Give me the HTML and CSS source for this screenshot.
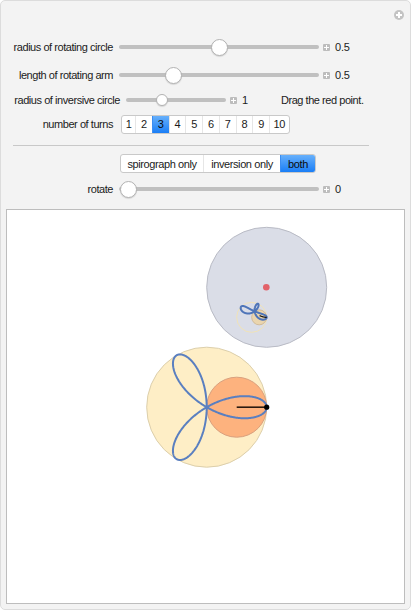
FILE: index.html
```html
<!DOCTYPE html>
<html>
<head>
<meta charset="utf-8">
<link rel="stylesheet" href="styles.css">
</head>
<body>
<div class="panel">
  <span class="corner-plus"></span>
  <div class="row r1">
    <span class="label">radius of rotating circle</span>
    <div class="slider"><div class="track"></div><div class="thumb" style="left:100px"></div></div>
    <span class="plus"></span><span class="val">0.5</span>
  </div>
  <div class="row r2">
    <span class="label">length of rotating arm</span>
    <div class="slider"><div class="track"></div><div class="thumb" style="left:54px"></div></div>
    <span class="plus"></span><span class="val">0.5</span>
  </div>
  <div class="row r3">
    <span class="label wide">radius of inversive circle</span>
    <div class="slider short"><div class="track"></div><div class="thumb small" style="left:35.5px"></div></div>
    <span class="plus"></span><span class="val">1</span>
    <span class="hint">Drag the red point.</span>
  </div>
  <div class="row r4">
    <span class="label">number of turns</span>
    <div class="seg nums">
      <span class="first">1</span><span>2</span><span class="sel">3</span><span>4</span><span>5</span><span>6</span><span>7</span><span>8</span><span>9</span><span class="ten">10</span>
    </div>
  </div>
  <div class="sep"></div>
  <div class="row r5">
    <div class="seg modes">
      <span class="m1">spirograph only</span><span class="m2">inversion only</span><span class="m3 sel">both</span>
    </div>
  </div>
  <div class="row r6">
    <span class="label">rotate</span>
    <div class="slider"><div class="track"></div><div class="thumb" style="left:9.7px"></div></div>
    <span class="plus"></span><span class="val">0</span>
  </div>
  <div class="frame">
    <svg class="plot" width="397" height="393" viewBox="7 210 397 393" xmlns="http://www.w3.org/2000/svg">
      <circle cx="266.7" cy="287.3" r="60" fill="#dadde7" stroke="#b9bbc5" stroke-width="1"/>
      <circle cx="206.7" cy="407.2" r="60" fill="#feeec6" stroke="#dccfac" stroke-width="1"/>
      <circle cx="236.7" cy="407.2" r="30" fill="#fdb27e" stroke="#d9a07e" stroke-width="1"/>
      <path id="rose" fill="none" stroke="#5a7fc0" stroke-width="2"/>
      <line x1="236.7" y1="407.2" x2="266.7" y2="407.2" stroke="#2a1a10" stroke-width="1.6"/>
      <circle cx="266.7" cy="407.2" r="2.6" fill="#000"/>
      <circle id="invBig" fill="none" stroke="#f1e3b8" stroke-width="1"/>
      <circle id="invSmall" fill="#ead5ae" stroke="#cdb48e" stroke-width="0.8"/>
      <path id="invRose" fill="none" stroke="#4f75b8" stroke-width="2"/>
      <path id="invArm" fill="none" stroke="#111" stroke-width="1.2"/>
      <circle cx="266.3" cy="287.3" r="3.3" fill="#e2626a"/>
    </svg>
  </div>
</div>
<script src="script.js"></script>
</body>
</html>
```
FILE: styles.css
```css
* { box-sizing: border-box; }
body {
  margin: 0;
  font-family: "Liberation Sans", Arial, sans-serif;
  font-size: 11px;
  color: #1b1b1b;
  background: #fff;
}
.panel {
  position: relative;
  width: 411px;
  height: 610px;
  background: #f3f3f3;
  border: 1px solid #dcdcdc;
  border-radius: 5px;
  padding-top: 32px;
}
.corner-plus {
  position: absolute;
  left: 393px;
  top: 9px;
  width: 10px;
  height: 10px;
  border-radius: 50%;
  background: #c3c3c3;
}
.corner-plus::before, .corner-plus::after {
  content: "";
  position: absolute;
  background: #fff;
}
.corner-plus::before { left: 2px; top: 4px; width: 6px; height: 2px; }
.corner-plus::after { left: 4px; top: 2px; width: 2px; height: 6px; }
.row {
  display: flex;
  align-items: center;
}
.r1, .r2 { height: 28px; }
.r3 { height: 22px; }
.r4 { height: 26px; }
.r5 { height: 19px; margin-top: 8px; padding-left: 119px; }
.r6 { height: 26px; margin-top: 3px; }
.label {
  flex: none;
  width: 112px;
  text-align: right;
  letter-spacing: -0.45px;
  white-space: nowrap;
}
.label.wide { width: 119px; }
.slider {
  position: relative;
  flex: none;
  width: 200px;
  height: 20px;
  margin-left: 6px;
}
.slider.short { width: 100px; }
.track {
  position: absolute;
  left: 0;
  right: 0;
  top: 8px;
  height: 4px;
  border-radius: 2px;
  background: #c0c0c0;
}
.thumb {
  position: absolute;
  top: 1.5px;
  width: 17px;
  height: 17px;
  margin-left: -8.5px;
  border-radius: 50%;
  background: #fff;
  border: 1px solid #b2b2b2;
  box-shadow: 0 1px 1px rgba(0,0,0,0.12);
}
.thumb.small {
  top: 4px;
  width: 12px;
  height: 12px;
  margin-left: -6px;
}
.plus {
  position: relative;
  flex: none;
  width: 7px;
  height: 7px;
  margin-left: 4px;
  background: #bdbdbd;
  border-radius: 1px;
}
.plus::before, .plus::after {
  content: "";
  position: absolute;
  background: #fff;
}
.plus::before { left: 1px; top: 3px; width: 5px; height: 1px; }
.plus::after { left: 3px; top: 1px; width: 1px; height: 5px; }
.val { margin-left: 5px; letter-spacing: -0.2px; }
.hint { margin-left: 33px; letter-spacing: -0.45px; }
.seg {
  display: flex;
  height: 19px;
  background: #fff;
  border: 1px solid #c9c9c9;
  border-radius: 3px;
  overflow: hidden;
}
.seg span {
  display: flex;
  align-items: center;
  justify-content: center;
  flex: none;
  border-left: 1px solid #e6e6e6;
  letter-spacing: -0.4px;
}
.seg span:first-child { border-left: none; }
.nums { margin-left: 8px; }
.nums span { width: 16.75px; }
.nums span.first { width: 13px; }
.nums span.ten { width: 19.5px; }
.seg .sel {
  background: linear-gradient(#67b0fb, #1a7ef6);
  border-left-color: #3b8ef2;
  color: #0c0c0c;
}
.m1 { width: 82px; }
.m2 { width: 77px; }
.m3 { width: 35px; }
.sep {
  width: 356px;
  height: 1px;
  margin: 8px 0 0 12px;
  background: #c8c8c8;
}
.frame {
  width: 399px;
  height: 395px;
  margin: 7px 0 0 5px;
  background: #fff;
  border: 1px solid #bdbdbd;
}
.plot { display: block; }
```
FILE: script.js
```js
(function () {
  var O = { x: 206.7, y: 407.2 }, A = 60;
  var C = { x: 266.7, y: 287.3 }, R = 60;
  function inv(p) {
    var dx = p.x - C.x, dy = p.y - C.y, d2 = dx * dx + dy * dy;
    return { x: C.x + R * R * dx / d2, y: C.y + R * R * dy / d2 };
  }
  function path(pts) {
    return pts.map(function (p, i) {
      return (i ? "L" : "M") + p.x.toFixed(2) + " " + p.y.toFixed(2);
    }).join(" ");
  }
  var rose = [];
  for (var i = 0; i <= 720; i++) {
    var t = i * Math.PI / 720, r = A * Math.cos(3 * t);
    rose.push({ x: O.x + r * Math.cos(t), y: O.y - r * Math.sin(t) });
  }
  document.getElementById("rose").setAttribute("d", path(rose) + " Z");
  document.getElementById("invRose").setAttribute("d", path(rose.map(inv)) + " Z");
  var arm = [];
  for (var j = 0; j <= 20; j++) arm.push(inv({ x: 236.7 + 30 * j / 20, y: 407.2 }));
  document.getElementById("invArm").setAttribute("d", path(arm));
  function invCircle(id, cx, cy, r) {
    var dx = cx - C.x, dy = cy - C.y, d = Math.sqrt(dx * dx + dy * dy);
    var ux = dx / d, uy = dy / d;
    var a = R * R / (d - r), b = R * R / (d + r);
    var m = (a + b) / 2, rr = (a - b) / 2;
    var el = document.getElementById(id);
    el.setAttribute("cx", C.x + ux * m);
    el.setAttribute("cy", C.y + uy * m);
    el.setAttribute("r", rr);
  }
  invCircle("invBig", O.x, O.y, 60);
  invCircle("invSmall", 236.7, 407.2, 30);
})();
```
